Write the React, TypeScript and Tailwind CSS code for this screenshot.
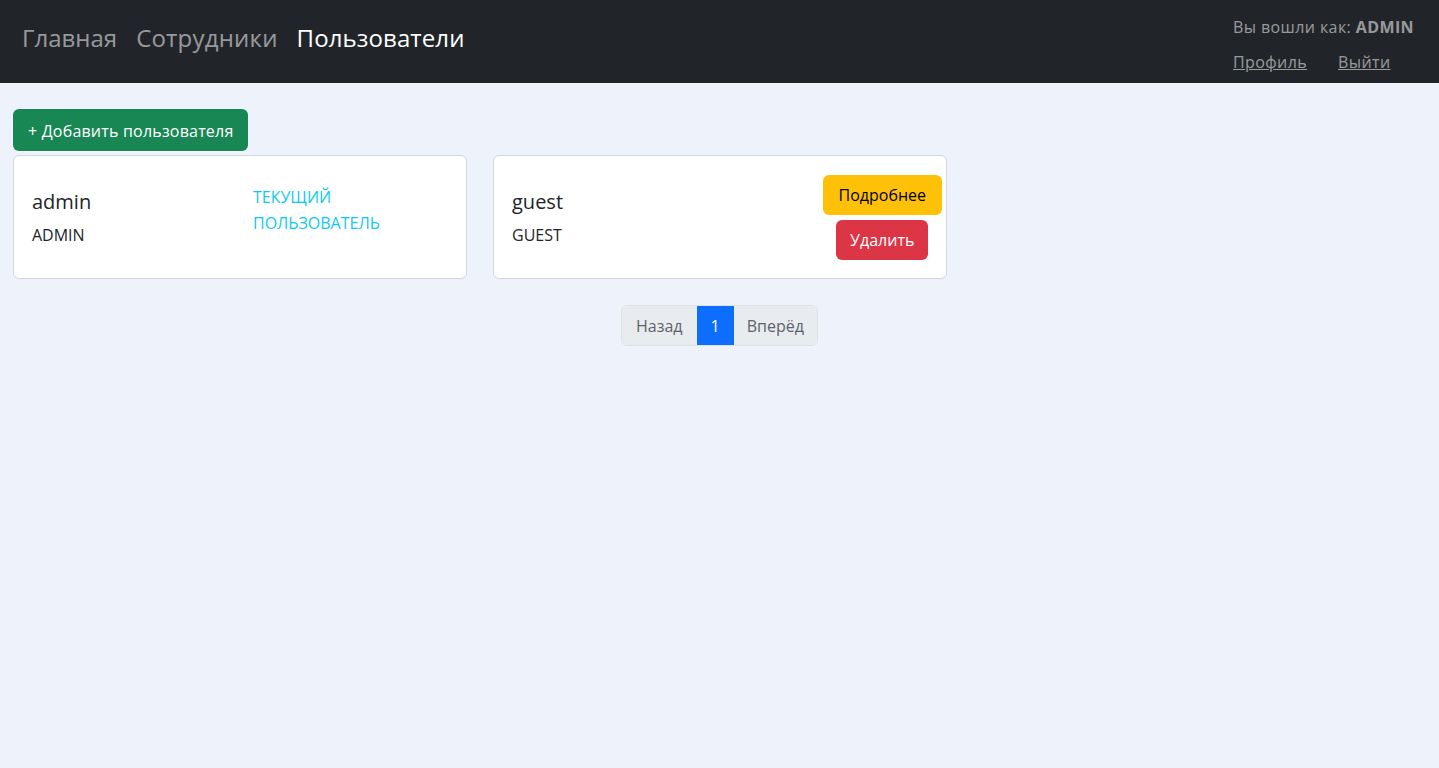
import React from 'react';

interface User {
  login: string;
  role: string;
  current: boolean;
}

const users: User[] = [
  { login: 'admin', role: 'ADMIN', current: true },
  { login: 'guest', role: 'GUEST', current: false },
];

const font = { fontFamily: '"Open Sans", "Noto Sans", sans-serif' };

function Navbar() {
  return (
    <header className="flex h-[83px] items-start justify-between bg-[#212529] pl-[22px] pr-[25px]">
      <nav className="mt-[21px] flex gap-[19px] text-[24px] leading-[34px]">
        <a className="text-[rgba(255,255,255,0.55)]">Главная</a>
        <a className="text-[rgba(255,255,255,0.55)] tracking-[0.2px]">Сотрудники</a>
        <a className="text-white tracking-[0.1px]">Пользователи</a>
      </nav>
      <div className="mt-[15px] flex flex-col text-[16px] tracking-[0.4px] text-[rgba(255,255,255,0.55)]">
        <span className="leading-[24px]">
          Вы вошли как: <b className="font-bold">ADMIN</b>
        </span>
        <div className="mt-[11px] flex gap-[31px] leading-[24px]">
          <a className="underline">Профиль</a>
          <a className="underline">Выйти</a>
        </div>
      </div>
    </header>
  );
}

function UserCard({ user }: { user: User }) {
  return (
    <div className="flex h-[124px] w-[454px] items-center rounded-[6px] border border-[#d3d6da] bg-white pl-[18px] pr-[4px]">
      <div className="grid flex-1 grid-cols-2 items-center">
        <div>
          <div className="text-[20px] leading-[30px] text-[#212529]">{user.login}</div>
          <div className="mt-[6px] text-[16px] leading-[24px] text-[#212529]">{user.role}</div>
        </div>
        {user.current ? (
          <div className="-mt-[14px] pl-[6px] text-[16px] leading-[26px] text-[#0dcaf0]">
            ТЕКУЩИЙ
            <br />
            ПОЛЬЗОВАТЕЛЬ
          </div>
        ) : (
          <div className="flex flex-col items-end">
            <div className="flex flex-col items-center gap-[5px]">
              <button className="h-[40px] rounded-[6px] bg-[#ffc107] px-[16px] pt-[1px] text-[16px] text-black">
                Подробнее
              </button>
              <button className="h-[40px] rounded-[6px] bg-[#dc3545] px-[14px] pt-[1px] text-[16px] text-white">
                Удалить
              </button>
            </div>
          </div>
        )}
      </div>
    </div>
  );
}

export default function App() {
  return (
    <div className="min-h-[768px] bg-[#eef2fb]" style={font}>
      <Navbar />
      <main className="px-[13px] pt-[26px]">
        <button className="h-[42px] rounded-[6px] bg-[#198754] px-[15px] pt-[2px] text-[16px] tracking-[0.2px] text-white">
          + Добавить пользователя
        </button>
        <div className="mt-[4px] flex gap-[26px]">
          {users.map((u) => (
            <UserCard key={u.login} user={u} />
          ))}
        </div>
        <div className="mt-[26px] flex w-[1413px] justify-center">
          <div className="flex h-[41px] overflow-hidden rounded-[6px] border border-[#dee2e6] text-[16px]">
            <span className="flex items-center bg-[#e9ecef] px-[14px] pt-[1px] text-[#5c636a]">Назад</span>
            <span className="flex items-center bg-[#0d6efd] px-[14px] pt-[1px] text-white">1</span>
            <span className="flex items-center bg-[#e9ecef] px-[13px] pt-[1px] text-[#5c636a]">Вперёд</span>
          </div>
        </div>
      </main>
    </div>
  );
}
